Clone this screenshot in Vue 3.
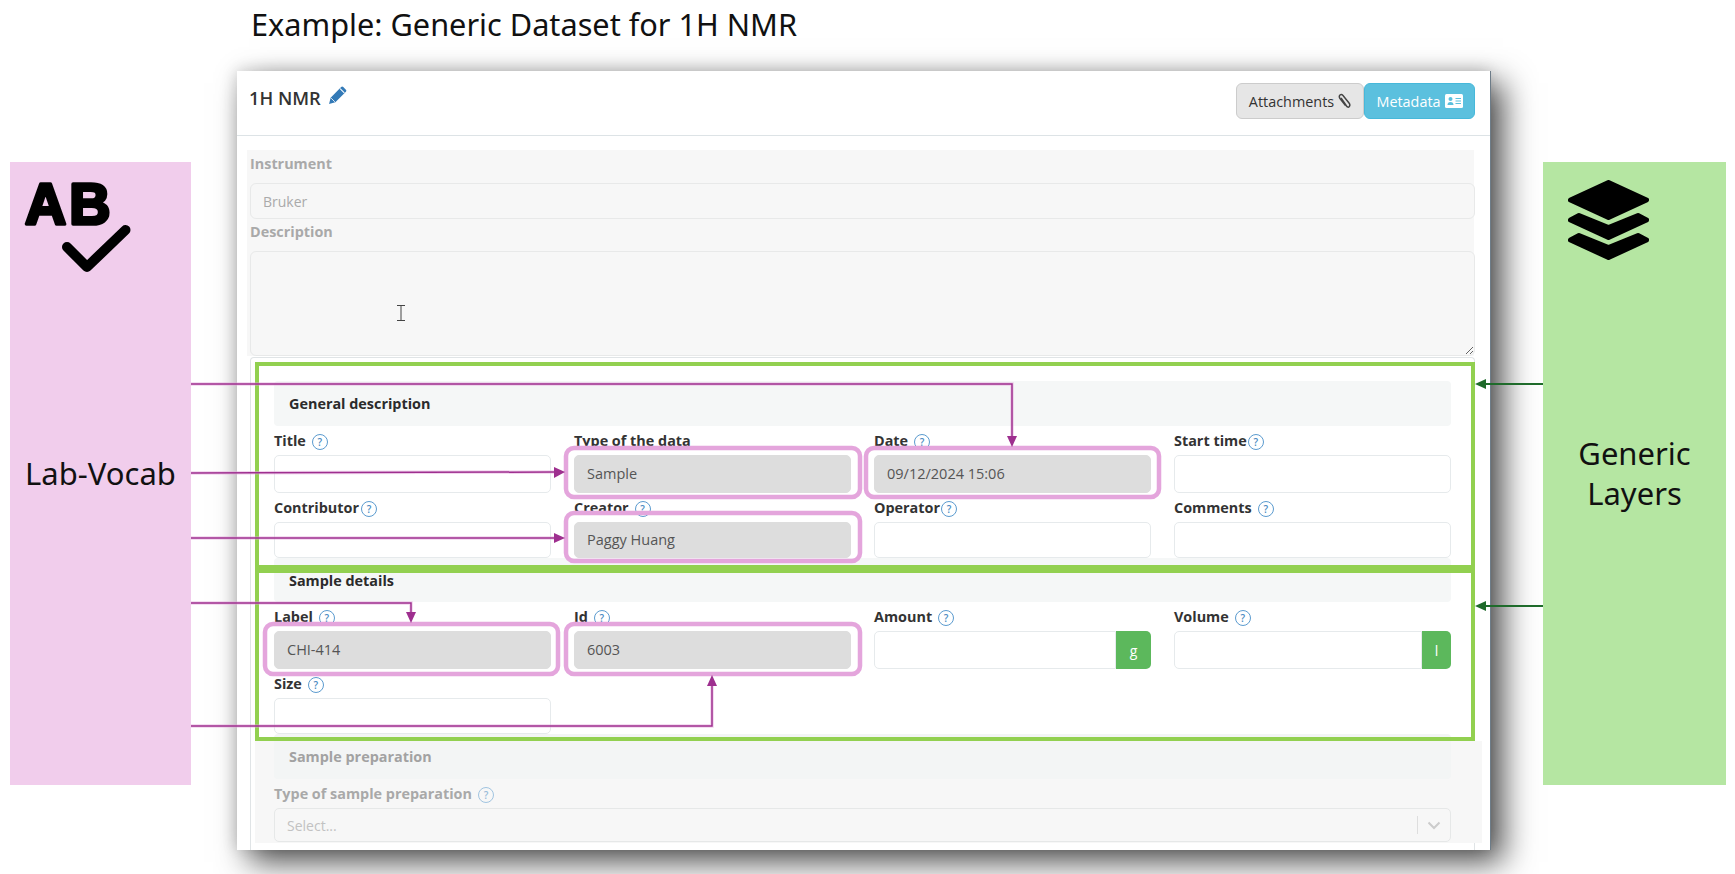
<script setup>
const generalFields = [
  { label: 'Title', gap: 6 },
  { label: 'Type of the data', value: 'Sample', filled: true, noHelp: true },
  { label: 'Date', value: '09/12/2024 15:06', filled: true, gap: 6 },
  { label: 'Start time', gap: 1 },
  { label: 'Contributor', gap: 2 },
  { label: 'Creator', value: 'Paggy Huang', filled: true, gap: 6 },
  { label: 'Operator', gap: 1 },
  { label: 'Comments', gap: 6 }
]

const sampleFields = [
  { label: 'Label', value: 'CHI-414', filled: true, gap: 6 },
  { label: 'Id', value: '6003', filled: true, gap: 6 },
  { label: 'Amount', unit: 'g', gap: 6 },
  { label: 'Volume', unit: 'l', gap: 6 },
  { label: 'Size', gap: 6 }
]

// annotation layer, page coordinates
const pinkBoxes = [
  { x: 566, y: 448, w: 294, h: 49 },
  { x: 866, y: 448, w: 293, h: 49 },
  { x: 566, y: 513, w: 294, h: 48 },
  { x: 265, y: 624, w: 293, h: 50 },
  { x: 566, y: 624, w: 294, h: 50 }
]

const purpleLines = [
  'M191 384 H1012 V436',
  'M191 473 L554 472',
  'M191 538 H554',
  'M191 603 H411 V612',
  'M191 726 H712 V686'
]

const purpleHeads = [
  '1007,436 1017,436 1012,447',
  '554,467 554,478 565,472',
  '554,533 554,543 565,538',
  '406,612 416,612 411,623',
  '707,686 717,686 712,675'
]
</script>

<template>
  <div class="page">
    <h1 class="slide-title">Example: Generic Dataset for 1H NMR</h1>

    <div class="stage">
      <aside class="side side-pink">
        <svg class="ab-icon" width="110" height="100" viewBox="0 0 110 100">
          <text x="6" y="45" class="ab-text">AB</text>
          <path d="M48 68 L68 88 L106.500 51" fill="none" stroke="#000" stroke-width="10" stroke-linecap="round" stroke-linejoin="round" />
        </svg>
        <div class="side-text lab-text">Lab-Vocab</div>
      </aside>

      <section class="card">
        <header class="card-head">
          <div class="card-title">
            1H NMR
            <svg width="20" height="20" viewBox="0 0 19 19">
              <path d="M1 18 L2.500 12 L12.500 2 Q13.500 1 14.500 2 L17 4.500 Q18 5.500 17 6.500 L7 16.500 Z" fill="#337ab7" />
              <path d="M11.500 3.500 L15.500 7.500" stroke="#fff" stroke-width="1" />
              <path d="M3 12.500 L6.500 16" stroke="#fff" stroke-width="0.800" />
            </svg>
          </div>
          <div class="btn-group">
            <button class="btn btn-grey">
              Attachments
              <svg width="13" height="16" viewBox="0 0 13 16">
                <path d="M3 5 L8.500 13 Q10 15 11.300 13.500 Q12.500 12 11 10 L5 2.500 Q3.500 0.800 2 2 Q0.600 3.300 2 5.500 L7.500 12.500" fill="none" stroke="#444" stroke-width="1.500" />
              </svg>
            </button>
            <button class="btn btn-info">
              Metadata
              <svg width="18" height="14" viewBox="0 0 18 14">
                <rect width="18" height="14" rx="1.500" fill="#fff" />
                <circle cx="5.500" cy="5" r="2" fill="#5bc0de" />
                <path d="M2.500 11 Q2.500 8 5.500 8 Q8.500 8 8.500 11 Z" fill="#5bc0de" />
                <path d="M10.500 4.500 H16 M10.500 7 H16 M10.500 9.500 H16" stroke="#5bc0de" stroke-width="1.200" />
              </svg>
            </button>
          </div>
        </header>

        <div class="card-body">
          <div class="locked">
            <label class="locked-label first">Instrument</label>
            <input class="locked-input" value="Bruker" disabled />
            <label class="locked-label">Description</label>
            <textarea class="locked-area" disabled></textarea>
          </div>

          <div class="panel">
            <h3 class="sec-head">General description</h3>
            <div class="grid">
              <div v-for="f in generalFields" :key="f.label" class="field">
                <div class="field-label">
                  {{ f.label }}
                  <span v-if="!f.noHelp" class="help" :style="{ marginLeft: f.gap + 'px' }">?</span>
                </div>
                <input class="field-input" :class="{ filled: f.filled }" :value="f.value" />
              </div>
            </div>

            <h3 class="sec-head second">Sample details</h3>
            <div class="grid">
              <div v-for="f in sampleFields" :key="f.label" class="field">
                <div class="field-label">
                  {{ f.label }}
                  <span class="help" :style="{ marginLeft: f.gap + 'px' }">?</span>
                </div>
                <div v-if="f.unit" class="input-group">
                  <input class="field-input" />
                  <span class="addon" :class="'addon-' + f.unit">{{ f.unit }}</span>
                </div>
                <input v-else class="field-input" :class="{ filled: f.filled }" :value="f.value" />
              </div>
            </div>

            <div class="prep">
              <h3 class="sec-head">Sample preparation</h3>
              <div class="field-label">
                Type of sample preparation
                <span class="help" style="margin-left: 6px">?</span>
              </div>
              <div class="select">
                <span>Select...</span>
                <span class="select-end">
                  <svg width="14" height="9" viewBox="0 0 14 9">
                    <path d="M1.500 1.500 L7 7 L12.500 1.500" fill="none" stroke="#ccc" stroke-width="2" />
                  </svg>
                </span>
              </div>
            </div>
          </div>
        </div>
      </section>

      <aside class="side side-green">
        <svg class="layers-icon" width="81" height="80" viewBox="0 0 81 80">
          <g fill="#000" stroke="#000" stroke-width="5" stroke-linejoin="round">
            <path d="M40.500 2.500 L78.500 20 L40.500 37.500 L2.500 20 Z" />
            <path d="M11 35.500 L40.500 47.500 L70 35.500 L78.500 40 L40.500 57.500 L2.500 40 Z" />
            <path d="M11 55.500 L40.500 67.500 L70 55.500 L78.500 60 L40.500 77.500 L2.500 60 Z" />
          </g>
        </svg>
        <div class="side-text layers-text">Generic<br />Layers</div>
      </aside>
    </div>

    <svg class="overlay" width="1735" height="874" viewBox="0 0 1735 874">
      <g fill="none" stroke="#92d050" stroke-width="4">
        <rect x="257" y="364" width="1216" height="203" />
        <rect x="257" y="571" width="1216" height="168" />
      </g>
      <rect v-for="(b, i) in pinkBoxes" :key="i" :x="b.x" :y="b.y" :width="b.w" :height="b.h" rx="8" fill="none" stroke="#e4a5dc" stroke-width="4.500" />
      <path v-for="(d, i) in purpleLines" :key="'h' + i" :d="d" fill="none" stroke="#e4a5dc" stroke-opacity="0.500" stroke-width="3.500" />
      <path v-for="(d, i) in purpleLines" :key="'l' + i" :d="d" fill="none" stroke="#9e2f8f" stroke-width="1.500" />
      <polygon v-for="(p, i) in purpleHeads" :key="'a' + i" :points="p" fill="#9e2f8f" />
      <g stroke="#1f6b2b" stroke-width="2" fill="#1f6b2b">
        <path d="M1543 384 H1482" />
        <path d="M1543 606 H1482" />
        <polygon stroke="none" points="1486,379 1486,389 1475,384" />
        <polygon stroke="none" points="1486,601 1486,611 1475,606" />
      </g>
      <path d="M397 305.500 H401 M405 305.500 H401 M401 305.500 V320.500 M397 320.500 H405" fill="none" stroke="#444" stroke-width="1" />
    </svg>
  </div>
</template>

<style>
body {
  background: #fff;
}
</style>

<style scoped>
.page {
  position: relative;
  width: 1735px;
  height: 874px;
  overflow: hidden;
  background: #fff;
  font-family: "Open Sans", "Liberation Sans", sans-serif;
}

.slide-title {
  margin: 0;
  padding-left: 251px;
  height: 71px;
  box-sizing: border-box;
  padding-top: 3px;
  font-family: "Noto Sans", sans-serif;
  font-size: 30.700px;
  line-height: 42px;
  font-weight: 400;
  color: #111;
}

.stage {
  display: flex;
  align-items: flex-start;
}

.side {
  margin-top: 91px;
  height: 623px;
  flex: none;
}

.side-pink {
  width: 181px;
  margin-left: 10px;
  background: #f1cdec;
}

.side-green {
  width: 183px;
  margin-left: 52px;
  background: #b5e6a2;
}

.ab-icon {
  display: block;
  margin: 17px 0 0 9px;
  overflow: visible;
}

.ab-text {
  font-family: "Liberation Sans", sans-serif;
  font-size: 57px;
  font-weight: 700;
  letter-spacing: 3px;
  fill: #000;
  stroke: #000;
  stroke-width: 3.500px;
  stroke-linejoin: round;
}

.layers-icon {
  display: block;
  margin: 18px 0 0 25px;
}

.side-text {
  font-family: "Noto Sans", sans-serif;
  font-size: 31px;
  line-height: 40px;
  text-align: center;
  color: #111;
}

.lab-text {
  margin-top: 174px;
}

.layers-text {
  margin-top: 173px;
}

.card {
  flex: none;
  width: 1254px;
  height: 779px;
  margin-left: 46px;
  background: #fff;
  border-right: 1px solid #6d7c88;
  box-sizing: border-box;
  box-shadow: 12px 12px 30px rgba(0, 0, 0, 0.7), -2px -2px 14px rgba(0, 0, 0, 0.12);
  overflow: hidden;
}

.card-head {
  display: flex;
  justify-content: space-between;
  height: 64px;
  box-sizing: content-box;
  padding: 0 15px 0 12px;
  border-bottom: 1px solid #dde3e6;
}

.card-title {
  display: flex;
  align-items: flex-start;
  gap: 7px;
  padding-top: 14px;
  font-size: 18.300px;
  line-height: 25px;
  font-weight: 600;
  color: #333;
}

.btn-group {
  display: flex;
  padding-top: 12px;
}

.btn {
  display: flex;
  align-items: center;
  justify-content: center;
  gap: 4px;
  height: 36px;
  padding: 0;
  font-family: inherit;
  font-size: 14.400px;
  box-sizing: border-box;
}

.btn-grey {
  width: 128px;
  background: #e6e6e6;
  border: 1px solid #ccc;
  border-radius: 6px;
  color: #333;
}

.btn-info {
  width: 111px;
  background: #5bc0de;
  border: 1px solid #46b8da;
  border-radius: 6px;
  color: #fff;
}

.card-body {
  padding: 14px 16px 0 10px;
}

.locked {
  padding: 0 0 1px 3px;
  background: #f7f7f7;
  height: 206px;
  box-sizing: border-box;
}

.locked-label {
  display: block;
  height: 32px;
  font-size: 14.400px;
  line-height: 26px;
  font-weight: 700;
  color: #a9a9a9;
  padding-left: 0;
}

.locked-label.first {
  height: 33px;
  line-height: 28px;
}

.locked-input,
.locked-area {
  display: block;
  width: calc(100% + 1px);
  box-sizing: border-box;
  background: #f7f7f7;
  border: 1px solid #e8e9e9;
  border-radius: 6px;
  padding: 0 12px;
  font-family: inherit;
  font-size: 14px;
  color: #aaa;
  outline: none;
}

.locked-input {
  height: 36px;
}

.locked-area {
  height: 105px;
}

.panel {
  margin: 1px -1px 0 3px;
  padding: 23px 23px 0;
  background: #fff;
  border: 1px solid #e0e4e6;
  border-bottom: none;
  border-radius: 4px 4px 0 0;
  height: 500px;
  box-sizing: border-box;
}

.sec-head {
  position: relative;
  margin: 0;
  height: 45px;
  padding-left: 15px;
  background: #f5f7f7;
  border-radius: 4px;
  font-size: 14.400px;
  line-height: 46px;
  font-weight: 700;
  color: #2b2b2b;
}

.sec-head.second {
  height: 44px;
  line-height: 45px;
}

.grid {
  display: grid;
  grid-template-columns: repeat(4, 277px);
  column-gap: 23px;
}

.field-label {
  display: flex;
  align-items: center;
  height: 29px;
  box-sizing: border-box;
  font-size: 14.400px;
  font-weight: 700;
  color: #333;
}

.help {
  display: inline-flex;
  align-items: center;
  justify-content: center;
  width: 16px;
  height: 16px;
  margin-top: 2px;
  box-sizing: border-box;
  border: 1.500px solid #5b9bcf;
  border-radius: 50%;
  font-size: 10px;
  font-weight: 600;
  line-height: 1;
  color: #4a8bc2;
}

.field-input {
  display: block;
  width: 100%;
  min-width: 0;
  height: 38px;
  padding: 0 12px 2px;
  box-sizing: border-box;
  background: #fff;
  border: 1px solid #e6eaec;
  border-radius: 5px;
  font-family: inherit;
  font-size: 14.500px;
  color: #555;
  outline: none;
}

.field:nth-child(n + 5) .field-input {
  height: 36px;
}

.field-input.filled {
  background: #dddddd;
  border-color: #dddddd;
}

.input-group {
  display: flex;
}

.input-group .field-input {
  flex: 1;
  border-radius: 5px 0 0 5px;
}

.addon {
  flex: none;
  display: flex;
  align-items: center;
  justify-content: center;
  height: 38px;
  background: #5cb85c;
  border-radius: 0 5px 5px 0;
  font-size: 14px;
  color: #fff;
}

.addon-g {
  width: 35px;
}

.addon-l {
  width: 29px;
}

.prep {
  position: relative;
}

.prep::before {
  content: "";
  position: absolute;
  left: -19px;
  right: -31px;
  top: 7px;
  bottom: -1px;
  background: #f7f7f7;
}

.prep .sec-head {
  background: #f3f5f5;
  color: #a2a2a2;
}

.prep .field-label {
  position: relative;
  color: #a9a9a9;
}

.prep .help {
  opacity: 0.55;
}

.select {
  position: relative;
  display: flex;
  align-items: center;
  justify-content: space-between;
  height: 34px;
  padding-left: 12px;
  box-sizing: border-box;
  background: #f7f7f7;
  border: 1px solid #e6e8e8;
  border-radius: 5px;
  font-size: 14px;
  color: #c2c2c2;
}

.select-end {
  display: flex;
  align-items: center;
  justify-content: center;
  width: 32px;
  height: 18px;
  border-left: 1px solid #dedede;
}

.overlay {
  position: absolute;
  left: 0;
  top: 0;
  pointer-events: none;
}
</style>
